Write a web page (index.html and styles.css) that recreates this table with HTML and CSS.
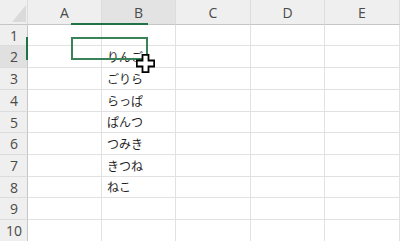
FILE: index.html
```html
<!DOCTYPE html>
<html lang="ja">
<head>
<meta charset="utf-8">
<link rel="stylesheet" href="styles.css">
</head>
<body>
<div class="sheet">
  <div class="grid">
    <div class="hd corner"><span class="tri"></span></div>
    <div class="hd col">A</div>
    <div class="hd col sel">B</div>
    <div class="hd col">C</div>
    <div class="hd col">D</div>
    <div class="hd col">E</div>

    <div class="hd row">1</div><div class="c"></div><div class="c"></div><div class="c"></div><div class="c"></div><div class="c"></div>
    <div class="hd row sel">2</div><div class="c"></div><div class="c t">りんご</div><div class="c"></div><div class="c"></div><div class="c"></div>
    <div class="hd row">3</div><div class="c"></div><div class="c t">ごりら</div><div class="c"></div><div class="c"></div><div class="c"></div>
    <div class="hd row">4</div><div class="c"></div><div class="c t">らっぱ</div><div class="c"></div><div class="c"></div><div class="c"></div>
    <div class="hd row">5</div><div class="c"></div><div class="c t">ぱんつ</div><div class="c"></div><div class="c"></div><div class="c"></div>
    <div class="hd row">6</div><div class="c"></div><div class="c t">つみき</div><div class="c"></div><div class="c"></div><div class="c"></div>
    <div class="hd row">7</div><div class="c"></div><div class="c t">きつね</div><div class="c"></div><div class="c"></div><div class="c"></div>
    <div class="hd row">8</div><div class="c"></div><div class="c t">ねこ</div><div class="c"></div><div class="c"></div><div class="c"></div>
    <div class="hd row">9</div><div class="c"></div><div class="c"></div><div class="c"></div><div class="c"></div><div class="c"></div>
    <div class="hd row">10</div><div class="c"></div><div class="c"></div><div class="c"></div><div class="c"></div><div class="c"></div>
  </div>
  <div class="col-mark"></div>
  <div class="row-mark"></div>
  <div class="drag-box"></div>
  <svg class="cursor" width="19" height="19" viewBox="0 0 19 19">
    <path d="M6.5 0.8 H12.5 V6.5 H18.2 V12.5 H12.5 V18.2 H6.5 V12.5 H0.8 V6.5 H6.5 Z" fill="#fff" stroke="#000" stroke-width="1.8"/>
  </svg>
</div>
</body>
</html>
```
FILE: styles.css
```css
html, body {
  margin: 0;
  padding: 0;
  background: #fff;
}
.sheet {
  position: relative;
  width: 400px;
  height: 241px;
  overflow: hidden;
  font-family: "Noto Sans CJK JP", "Noto Sans", sans-serif;
}
.grid {
  display: grid;
  grid-template-columns: 28px 74px 74px 75px 74px 75px;
  grid-template-rows: 25px 21px 22px 22px 22px 21px 22px 22px 21px 22px 22px;
}
.hd {
  background: #efefef;
  color: #4a4a4a;
  font-family: "Open Sans", "Noto Sans", sans-serif;
  font-size: 14px;
  display: flex;
  align-items: center;
  justify-content: center;
  box-sizing: border-box;
}
.corner {
  border-right: 1px solid #dcdcdc;
  border-bottom: 1px solid #c6c6c6;
  position: relative;
}
.tri {
  position: absolute;
  left: 12px;
  top: 5px;
  width: 0;
  height: 0;
  border-left: 14px solid transparent;
  border-bottom: 17px solid #dadada;
}
.col {
  border-right: 1px solid #dcdcdc;
  border-bottom: 1px solid #c6c6c6;
  padding-top: 1px;
}
.col.sel {
  background: #e3e3e3;
}
.row {
  border-right: 1px solid #c6c6c6;
  border-bottom: 1px solid #dcdcdc;
  padding-left: 1px;
}
.row.sel {
  background: #e0e0e0;
}
.c {
  border-right: 1px solid #e1e1e1;
  border-bottom: 1px solid #e1e1e1;
  box-sizing: border-box;
  background: #fff;
}
.t {
  font-size: 12px;
  color: #1f1f1f;
  padding-left: 5px;
  display: flex;
  align-items: center;
  line-height: 1;
}
.col-mark {
  position: absolute;
  left: 71px;
  top: 23px;
  width: 77px;
  height: 2px;
  background: #217346;
}
.row-mark {
  position: absolute;
  left: 26px;
  top: 37px;
  width: 2px;
  height: 23px;
  background: #217346;
}
.drag-box {
  position: absolute;
  left: 71px;
  top: 37px;
  width: 77px;
  height: 23px;
  box-sizing: border-box;
  border: 2px solid #3a8257;
}
.cursor {
  position: absolute;
  left: 136px;
  top: 54px;
}
```
